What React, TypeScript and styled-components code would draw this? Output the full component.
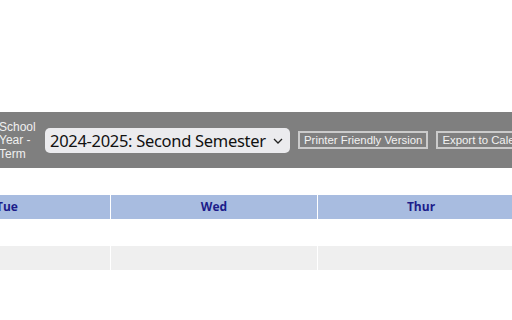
import React from "react"
import styled, { createGlobalStyle } from "styled-components"

const days = ["Sun", "Mon", "Tue", "Wed", "Thur", "Fri", "Sat"]

const GlobalStyle = createGlobalStyle`
  html, body {
    margin: 0;
    padding: 0;
    background: #ffffff;
    overflow: hidden;
  }
  body {
    font-family: "Liberation Sans", Arial, sans-serif;
  }
`

const App = () => {
  return (
    <>
      <GlobalStyle />
      <Page>
        <Toolbar>
          <TermLabel>School Year - Term</TermLabel>
          <SelectWrap>
            <TermSelect defaultValue="2024-2025-2">
              <option value="2024-2025-1">2024-2025: First Semester</option>
              <option value="2024-2025-2">2024-2025: Second Semester</option>
            </TermSelect>
            <Chevron viewBox="0 0 10 6" aria-hidden="true">
              <path d="M1 1 L5 5 L9 1" fill="none" stroke="#222" strokeWidth="1.3" />
            </Chevron>
          </SelectWrap>
          <ToolButton>Printer Friendly Version</ToolButton>
          <ToolButton>Export to Calendar</ToolButton>
        </Toolbar>

        <Calendar>
          {days.map((day) => (
            <HeaderCell key={day}>{day}</HeaderCell>
          ))}
          {days.map((day) => (
            <DayCell key={`a-${day}`} shaded={false} />
          ))}
          {days.map((day) => (
            <DayCell key={`b-${day}`} shaded />
          ))}
        </Calendar>
      </Page>
    </>
  )
}

const Page = styled.div`
  padding-top: 112px;
  width: 512px;
  height: 320px;
  box-sizing: border-box;
  overflow: hidden;
`

const Toolbar = styled.div`
  display: flex;
  align-items: center;
  height: 56px;
  background-color: #7f7f7f;
  white-space: nowrap;
`

const TermLabel = styled.div`
  width: 38px;
  flex-shrink: 0;
  margin-left: -1px;
  white-space: normal;
  font-size: 12px;
  line-height: 13.5px;
  color: #f0f0f0;
  margin-top: 2px;
`

const SelectWrap = styled.div`
  position: relative;
  flex-shrink: 0;
  margin-left: 8px;
  display: flex;
`

const TermSelect = styled.select`
  appearance: none;
  width: 245px;
  height: 25px;
  padding: 0 20px 0 5px;
  border: none;
  border-radius: 5px;
  background-color: #ebebee;
  color: #111;
  font-family: "Noto Sans", "DejaVu Sans", sans-serif;
  font-size: 16.5px;
  letter-spacing: -0.3px;
  outline: none;
`

const Chevron = styled.svg`
  position: absolute;
  right: 7px;
  top: 10px;
  width: 10px;
  height: 6px;
  pointer-events: none;
`

const ToolButton = styled.button`
  flex-shrink: 0;
  margin-left: 8px;
  height: 18px;
  padding: 0 4px;
  border: 2px solid #cbcbcb;
  border-radius: 0;
  background-color: #7f7f7f;
  color: #f2f2f2;
  font-family: "Liberation Sans", Arial, sans-serif;
  font-size: 11.4px;
  line-height: 14px;
`

const Calendar = styled.div`
  display: grid;
  grid-template-columns: repeat(7, 206px);
  grid-template-rows: 24px 25px 24px;
  column-gap: 1px;
  row-gap: 1px;
  margin-top: 27px;
  margin-left: -510px;
  width: max-content;
`

const HeaderCell = styled.div`
  display: flex;
  align-items: center;
  justify-content: center;
  padding-bottom: 1px;
  background-color: #a8bce0;
  color: #1c1c8a;
  font-family: "Open Sans", "Noto Sans", sans-serif;
  font-weight: bold;
  font-size: 12px;
`

const DayCell = styled.div<{ shaded: boolean }>`
  background-color: ${(props) => (props.shaded ? "#efefef" : "#ffffff")};
`

export default App
